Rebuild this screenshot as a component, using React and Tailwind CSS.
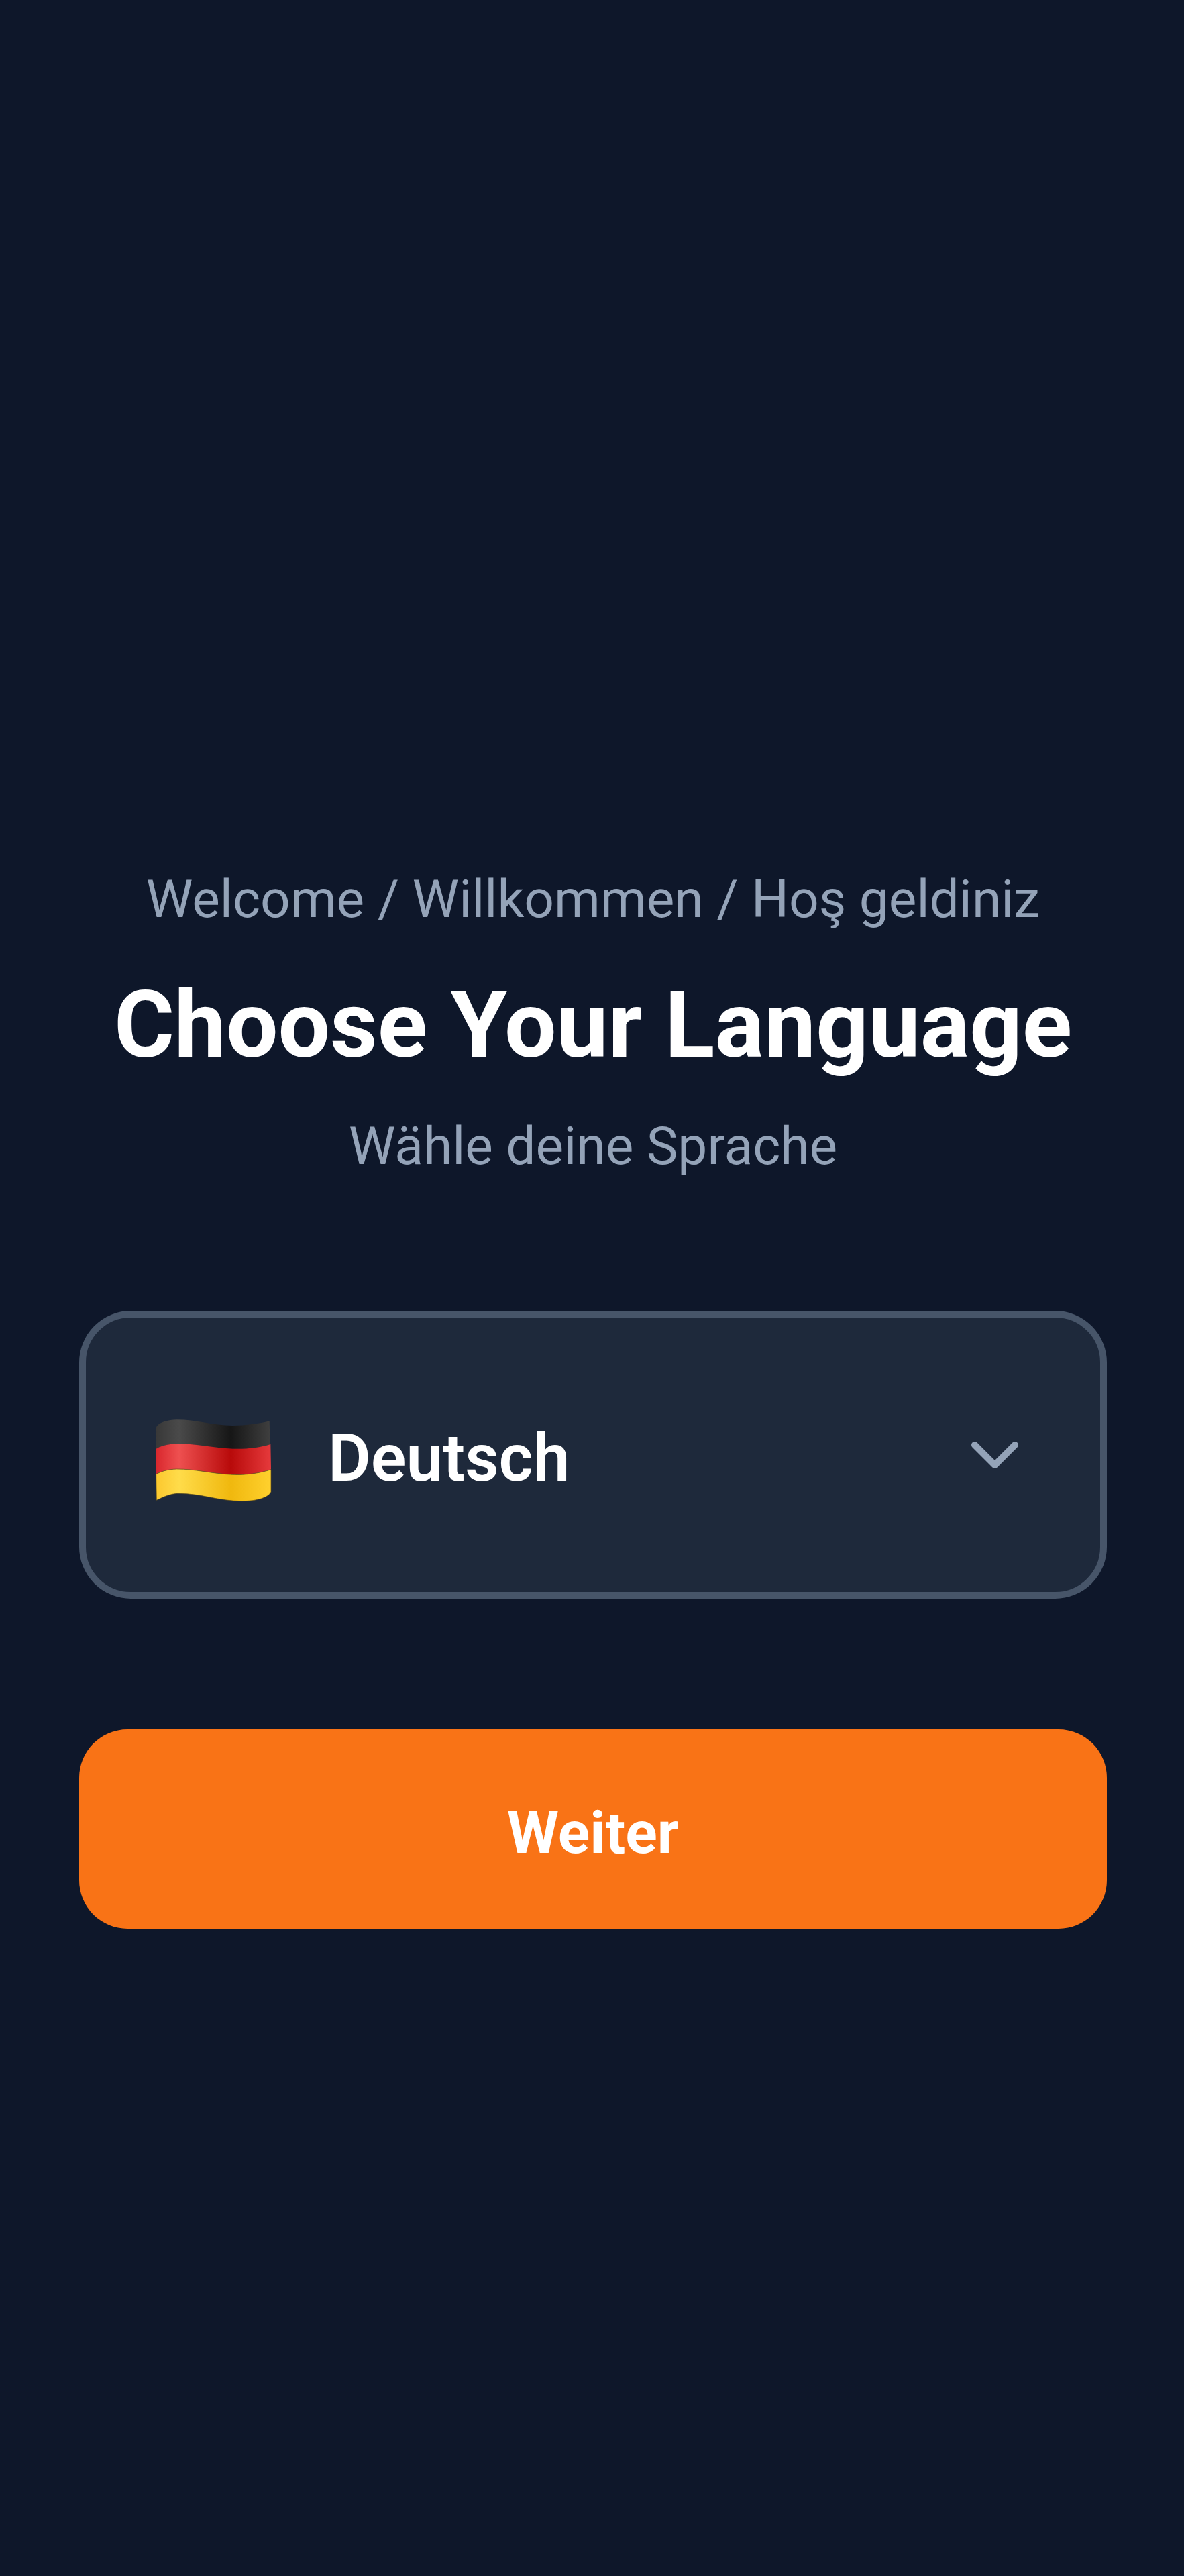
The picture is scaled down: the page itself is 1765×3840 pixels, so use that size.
import React from 'react';
import { ChevronDown } from 'lucide-react';

function GermanFlag() {
    return (
        <svg width="210" height="160" viewBox="0 0 630 480" className="shrink-0">
            <defs>
                <linearGradient id="flagBlack" gradientUnits="userSpaceOnUse" x1="68" y1="0" x2="582" y2="0">
                    <stop offset="0" stopColor="#383838" />
                    <stop offset="0.2" stopColor="#4a4a4a" />
                    <stop offset="0.65" stopColor="#161616" />
                    <stop offset="1" stopColor="#404040" />
                </linearGradient>
                <linearGradient id="flagRed" gradientUnits="userSpaceOnUse" x1="68" y1="0" x2="582" y2="0">
                    <stop offset="0" stopColor="#d9272d" />
                    <stop offset="0.2" stopColor="#ee5050" />
                    <stop offset="0.65" stopColor="#b80a0a" />
                    <stop offset="1" stopColor="#e63a3c" />
                </linearGradient>
                <linearGradient id="flagYellow" gradientUnits="userSpaceOnUse" x1="68" y1="0" x2="582" y2="0">
                    <stop offset="0" stopColor="#fcc82e" />
                    <stop offset="0.2" stopColor="#ffdc4a" />
                    <stop offset="0.65" stopColor="#f0b80e" />
                    <stop offset="1" stopColor="#ffd12e" />
                </linearGradient>
            </defs>
            <path
                fill="url(#flagBlack)"
                d="M68 120 C70 100 110 82 160 82 C250 82 320 108 410 108 C470 108 530 100 575 88 L578 200 C530 208 470 214 410 212 C320 208 240 188 160 190 C120 191 90 200 68 212 Z"
            />
            <path
                fill="url(#flagRed)"
                d="M68 212 C90 200 120 191 160 190 C240 188 320 208 410 212 C470 214 530 208 580 192 L582 305 C530 322 470 330 410 328 C320 324 240 302 160 303 C120 304 90 314 68 326 Z"
            />
            <path
                fill="url(#flagYellow)"
                stroke="#5a4a1c"
                strokeWidth="2"
                d="M68 326 C90 314 120 304 160 303 C240 302 320 324 410 328 C470 330 530 322 582 305 L582 405 C570 430 520 446 450 446 C350 446 270 412 170 412 C130 412 100 428 70 442 Z"
            />
        </svg>
    );
}

function App() {
    return (
        <div className="min-h-screen bg-[#0e172a] pl-[118px] pr-[115px] pt-[1290px] font-[Roboto,sans-serif]">
            {/* Heading */}
            <div className="text-center">
                <p className="text-[78.5px] leading-[100px] text-[#94a3b8]">Welcome / Willkommen / Hoş geldiniz</p>
                <h1 className="mt-[58px] text-[137.5px] leading-[160px] font-bold text-white">Choose Your Language</h1>
                <p className="mt-[50px] text-[78.5px] leading-[100px] text-[#94a3b8]">Wähle deine Sprache</p>
            </div>

            {/* Language select */}
            <button className="mt-[196px] flex h-[429px] w-full items-center rounded-[77px] border-[10px] border-[#475569] bg-[#1e293b] pl-[82px] pr-[97px]">
                <GermanFlag />
                <span className="ml-[69px] mt-[10px] flex-1 text-left text-[98px] font-semibold text-white">Deutsch</span>
                <ChevronDown size={120} strokeWidth={2} className="text-[#94a3b8]" />
            </button>

            {/* Continue */}
            <button className="mt-[195px] flex h-[297px] w-full items-center justify-center rounded-[72px] bg-[#f97316] pt-[10px] text-[88px] font-bold text-white">
                Weiter
            </button>
        </div>
    );
}

export default App;
